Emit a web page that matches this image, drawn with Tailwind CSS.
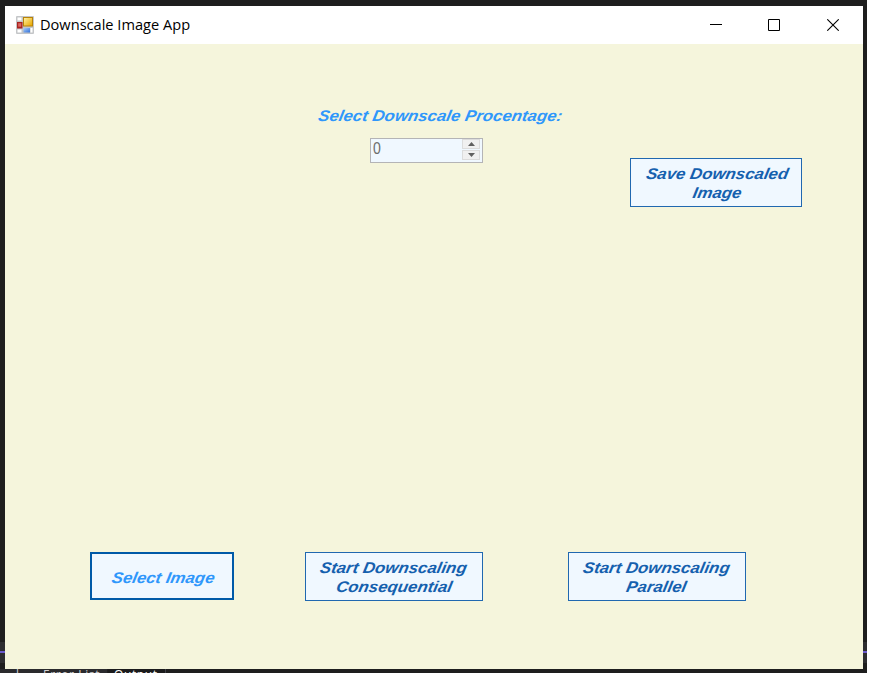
<!DOCTYPE html>
<html lang="en">
<head>
<meta charset="utf-8">
<title>Downscale Image App</title>
<script src="https://cdn.jsdelivr.net/npm/@tailwindcss/browser@4"></script>
</head>
<body class="w-[881px] h-[673px] overflow-hidden bg-white">
<div class="relative w-[867px] h-[673px] overflow-hidden bg-[#1e1e1e] pt-[6px] pl-[5px] pr-[4px]">
  <!-- editor behind the window -->
  <div class="absolute left-0 top-[642px] w-full h-[9px] bg-[#2d2d30]"></div>
  <div class="absolute left-0 top-[651px] w-full h-[2px] bg-[#6a5acd]"></div>
  <div class="absolute left-0 top-[653px] w-full h-[10px] bg-[#2d2d30]"></div>
  <div class="absolute left-0 top-[669px] h-[4px] w-[107px] overflow-hidden bg-[#2a2a2d]">
    <div class="flex text-[12px] leading-[14px] font-['Open_Sans',sans-serif] text-[#d0d0d0] whitespace-nowrap -mt-[1px]"><span class="w-[43px] pl-[16px]">l</span><span class="tracking-[0.6px]">Error List</span></div>
  </div>
  <div class="absolute left-[108px] top-[669px] h-[4px] w-[58px] overflow-hidden bg-[#1b1b1c] border-r border-[#3f3f46]">
    <div class="text-[12px] leading-[14px] font-['Open_Sans',sans-serif] text-white pl-[6px] -mt-[1px] tracking-[0.6px]">Output</div>
  </div>

  <main class="relative w-[858px] h-[663px] bg-[#f5f5dc]">
    <header class="flex items-center h-[38px] bg-white pl-[11px]">
      <svg width="18" height="18" viewBox="0 0 18 18">
        <defs>
          <linearGradient id="y" x2="1" y2="1"><stop stop-color="#fff0a0"/><stop offset="1" stop-color="#e9a800"/></linearGradient>
          <linearGradient id="b" x2="1" y2="1"><stop stop-color="#a9cdf8"/><stop offset="1" stop-color="#3270d8"/></linearGradient>
        </defs>
        <rect width="18" height="18" rx="1" fill="#c4c6c8"/>
        <path d="M1.5 1.5h4v3h-4zM1.5 13.5h4v3h-4zM14.5 12h2v4.5h-2z" fill="#fff"/>
        <rect x="1" y="6" width="5.5" height="6.5" fill="#a92320"/><rect x="2.2" y="7.2" width="3" height="3.5" fill="#dc6660"/>
        <rect x="7" y="1" width="10" height="9.5" fill="#b88208"/><rect x="8" y="2" width="8" height="7.5" fill="url(#y)"/>
        <rect x="7.5" y="12" width="6.5" height="4.5" fill="url(#b)"/>
      </svg>
      <h1 class="ml-[6px] mb-[2px] w-[160px] font-['Open_Sans',sans-serif] text-[15px] leading-[20px] text-black whitespace-nowrap origin-left scale-x-[.973]">Downscale Image App</h1>
      <div class="ml-auto flex items-center mr-[24px] gap-[46px]">
        <svg width="12" height="12"><path d="M0 5.5h12" stroke="#000"/></svg>
        <svg width="12" height="12"><path d="M.5.5h11v11H.5z" fill="none" stroke="#000"/></svg>
        <svg width="12" height="12" class="ml-[1px]"><path d="M.3.3l11.4 11.4M11.7.3L.3 11.7" stroke="#000" stroke-width="1.1"/></svg>
      </div>
    </header>

    <section class="flex flex-col font-['Liberation_Sans',Arial,sans-serif]">
      <div class="h-[94px] pt-[62px] pl-[313px]">
        <div class="w-[245px] flex justify-center text-[15.5px] leading-[20px] font-bold italic text-[#2f97fb] whitespace-nowrap"><span class="inline-block scale-x-[1.085] -skew-x-[10deg]">Select Downscale Procentage:</span></div>
      </div>
      <div class="flex h-[414px] items-start">
        <div class="ml-[365px] w-[113px] h-[25px] flex border-[1.5px] border-[#b4b4b6] bg-[#f0f8ff]">
          <span class="flex-1 pl-[2px] text-[16px] leading-[20px] text-[#6d6d6d]"><span class="inline-block scale-x-[.88] origin-left">0</span></span>
          <div class="flex flex-col gap-[1px] pb-[2px] pr-[2px]">
            <span class="w-[18px] h-[11px] bg-[#f0f0f0] border border-[#dcdcdc] flex items-center justify-center"><svg width="7" height="4"><path d="M0 4L3.5 0 7 4z" fill="#606060"/></svg></span>
            <span class="w-[18px] h-[10px] bg-[#f0f0f0] border border-[#dcdcdc] flex items-center justify-center"><svg width="7" height="4"><path d="M0 0L3.5 4 7 0z" fill="#606060"/></svg></span>
          </div>
        </div>
        <button class="mt-[20px] ml-[147px] w-[172px] h-[49px] pl-[2px] pt-px border border-[#2068b0] bg-[#f0f8ff] text-[15.5px] leading-[19px] font-bold italic text-[#1560ae] whitespace-nowrap"><span class="inline-block scale-x-[1.085] -skew-x-[10deg]">Save Downscaled</span><br><span class="inline-block scale-x-[1.085] -skew-x-[10deg]">Image</span></button>
      </div>
      <div class="flex items-start pl-[85px] text-[15.5px] leading-[19px] font-bold italic text-[#1560ae] whitespace-nowrap">
        <button class="w-[144px] h-[48px] pl-[2px] pt-[3px] border-2 border-[#005aa8] bg-[#f0f8ff] text-[#2f97fb]"><span class="inline-block scale-x-[1.085] -skew-x-[10deg]">Select Image</span></button>
        <button class="ml-[71px] w-[178px] h-[49px] border border-[#2068b0] bg-[#f0f8ff]"><span class="inline-block scale-x-[1.085] -skew-x-[10deg]">Start Downscaling</span><br><span class="inline-block scale-x-[1.085] -skew-x-[10deg]">Consequential</span></button>
        <button class="ml-[85px] w-[178px] h-[49px] border border-[#2068b0] bg-[#f0f8ff]"><span class="inline-block scale-x-[1.085] -skew-x-[10deg]">Start Downscaling</span><br><span class="inline-block scale-x-[1.085] -skew-x-[10deg]">Parallel</span></button>
      </div>
    </section>
  </main>
</div>
</body>
</html>
